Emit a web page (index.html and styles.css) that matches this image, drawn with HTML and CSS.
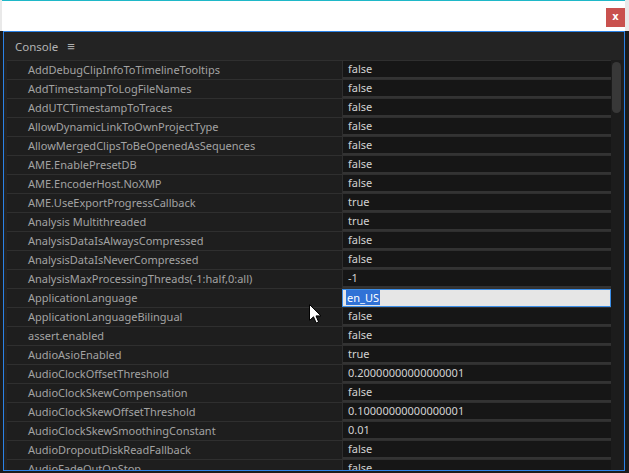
FILE: index.html
```html
<!DOCTYPE html>
<html>
<head>
<meta charset="utf-8">
<link rel="stylesheet" href="styles.css">
</head>
<body>
<div class="top">
  <div class="topbar">
    <div class="close">x</div>
  </div>
</div>
<div class="panel">
  <div class="header"><span class="title">Console</span><span class="menu">&#8801;</span></div>
  <div class="table">
    <div class="rows">
      <div class="row"><div class="name">AddDebugClipInfoToTimelineTooltips</div><div class="val">false</div></div>
      <div class="row"><div class="name">AddTimestampToLogFileNames</div><div class="val">false</div></div>
      <div class="row"><div class="name">AddUTCTimestampToTraces</div><div class="val">false</div></div>
      <div class="row"><div class="name">AllowDynamicLinkToOwnProjectType</div><div class="val">false</div></div>
      <div class="row"><div class="name">AllowMergedClipsToBeOpenedAsSequences</div><div class="val">false</div></div>
      <div class="row"><div class="name">AME.EnablePresetDB</div><div class="val">false</div></div>
      <div class="row"><div class="name">AME.EncoderHost.NoXMP</div><div class="val">false</div></div>
      <div class="row"><div class="name">AME.UseExportProgressCallback</div><div class="val">true</div></div>
      <div class="row"><div class="name">Analysis Multithreaded</div><div class="val">true</div></div>
      <div class="row"><div class="name">AnalysisDataIsAlwaysCompressed</div><div class="val">false</div></div>
      <div class="row"><div class="name">AnalysisDataIsNeverCompressed</div><div class="val">false</div></div>
      <div class="row"><div class="name">AnalysisMaxProcessingThreads(-1:half,0:all)</div><div class="val">-1</div></div>
      <div class="row"><div class="name">ApplicationLanguage</div><div class="val edit"><span class="sel">en_US</span></div></div>
      <div class="row"><div class="name">ApplicationLanguageBilingual</div><div class="val">false</div></div>
      <div class="row"><div class="name">assert.enabled</div><div class="val">false</div></div>
      <div class="row"><div class="name">AudioAsioEnabled</div><div class="val">true</div></div>
      <div class="row"><div class="name">AudioClockOffsetThreshold</div><div class="val">0.20000000000000001</div></div>
      <div class="row"><div class="name">AudioClockSkewCompensation</div><div class="val">false</div></div>
      <div class="row"><div class="name">AudioClockSkewOffsetThreshold</div><div class="val">0.10000000000000001</div></div>
      <div class="row"><div class="name">AudioClockSkewSmoothingConstant</div><div class="val">0.01</div></div>
      <div class="row"><div class="name">AudioDropoutDiskReadFallback</div><div class="val">false</div></div>
      <div class="row"><div class="name">AudioFadeOutOnStop</div><div class="val">false</div></div>
    </div>
    <div class="scroll"><div class="thumb"></div></div>
  </div>
</div>
<svg class="cursor" width="13" height="20" viewBox="0 0 13 20"><path d="M0.5 0.5 L0.5 16.5 L4.5 12.8 L7.2 19 L9.6 18 L7 11.9 L12 11.9 Z" fill="#fff" stroke="#000" stroke-width="1"/></svg>
</body>
</html>
```
FILE: styles.css
```css
html, body {
  margin: 0;
  padding: 0;
}
body {
  width: 629px;
  height: 473px;
  overflow: hidden;
  background: #1b1b1b;
  font-family: "Noto Sans", "Open Sans", sans-serif;
  font-size: 11px;
  position: relative;
}
.top {
  background: #e9e9e9;
  padding: 0 4px 0 2px;
}
.topbar {
  height: 30px;
  background: #ffffff;
  border-top: 1px solid #1fb8c8;
  display: flex;
  justify-content: flex-end;
  align-items: flex-start;
}
.close {
  width: 19px;
  height: 19px;
  margin-top: 7px;
  background: #c9514e;
  color: #fff;
  font-family: "DejaVu Sans", sans-serif;
  font-weight: bold;
  font-size: 10px;
  line-height: 18px;
  text-align: center;
}
.panel {
  margin-left: 3px;
  width: 620px;
  height: 438px;
  border: 1px solid #2b82e6;
  background: #232323;
  overflow: hidden;
}
.header {
  height: 28px;
  display: flex;
  align-items: center;
  padding-left: 11px;
  color: #b4b4b4;
  font-size: 11.5px;
}
.menu {
  margin-left: 9px;
  font-size: 13px;
  color: #b0b0b0;
}
.table {
  display: flex;
  margin-left: 3px;
  background: #1e1e1e;
}
.rows {
  width: 604px;
}
.row {
  display: grid;
  grid-template-columns: 335px 269px;
  height: 18px;
  border-top: 1px solid #2f2f2f;
}
.name {
  padding-left: 21px;
  color: #a3a3a3;
  line-height: 17px;
  white-space: nowrap;
  overflow: hidden;
  background: #1e1e1e;
}
.val {
  background: #161616;
  border-left: 1px solid #2e2e2e;
  border-bottom: 2px solid #333333;
  color: #d2d2d2;
  padding-left: 5px;
  line-height: 16px;
  white-space: nowrap;
  overflow: hidden;
}
.val.edit {
  background: #e6e6e6;
  border: 1px solid #3b8ee8;
  border-bottom: 1px solid #3b8ee8;
  padding-left: 3px;
  color: #fff;
}
.sel {
  background: #3072d6;
  color: #fff;
  padding: 0 1px;
}
.scroll {
  width: 11px;
  padding-top: 2px;
  background: #1c1c1c;
}
.thumb {
  width: 9px;
  height: 51px;
  margin-left: 1px;
  border-radius: 5px;
  background: #383838;
}
.cursor {
  position: absolute;
  left: 309px;
  top: 304px;
}
```
